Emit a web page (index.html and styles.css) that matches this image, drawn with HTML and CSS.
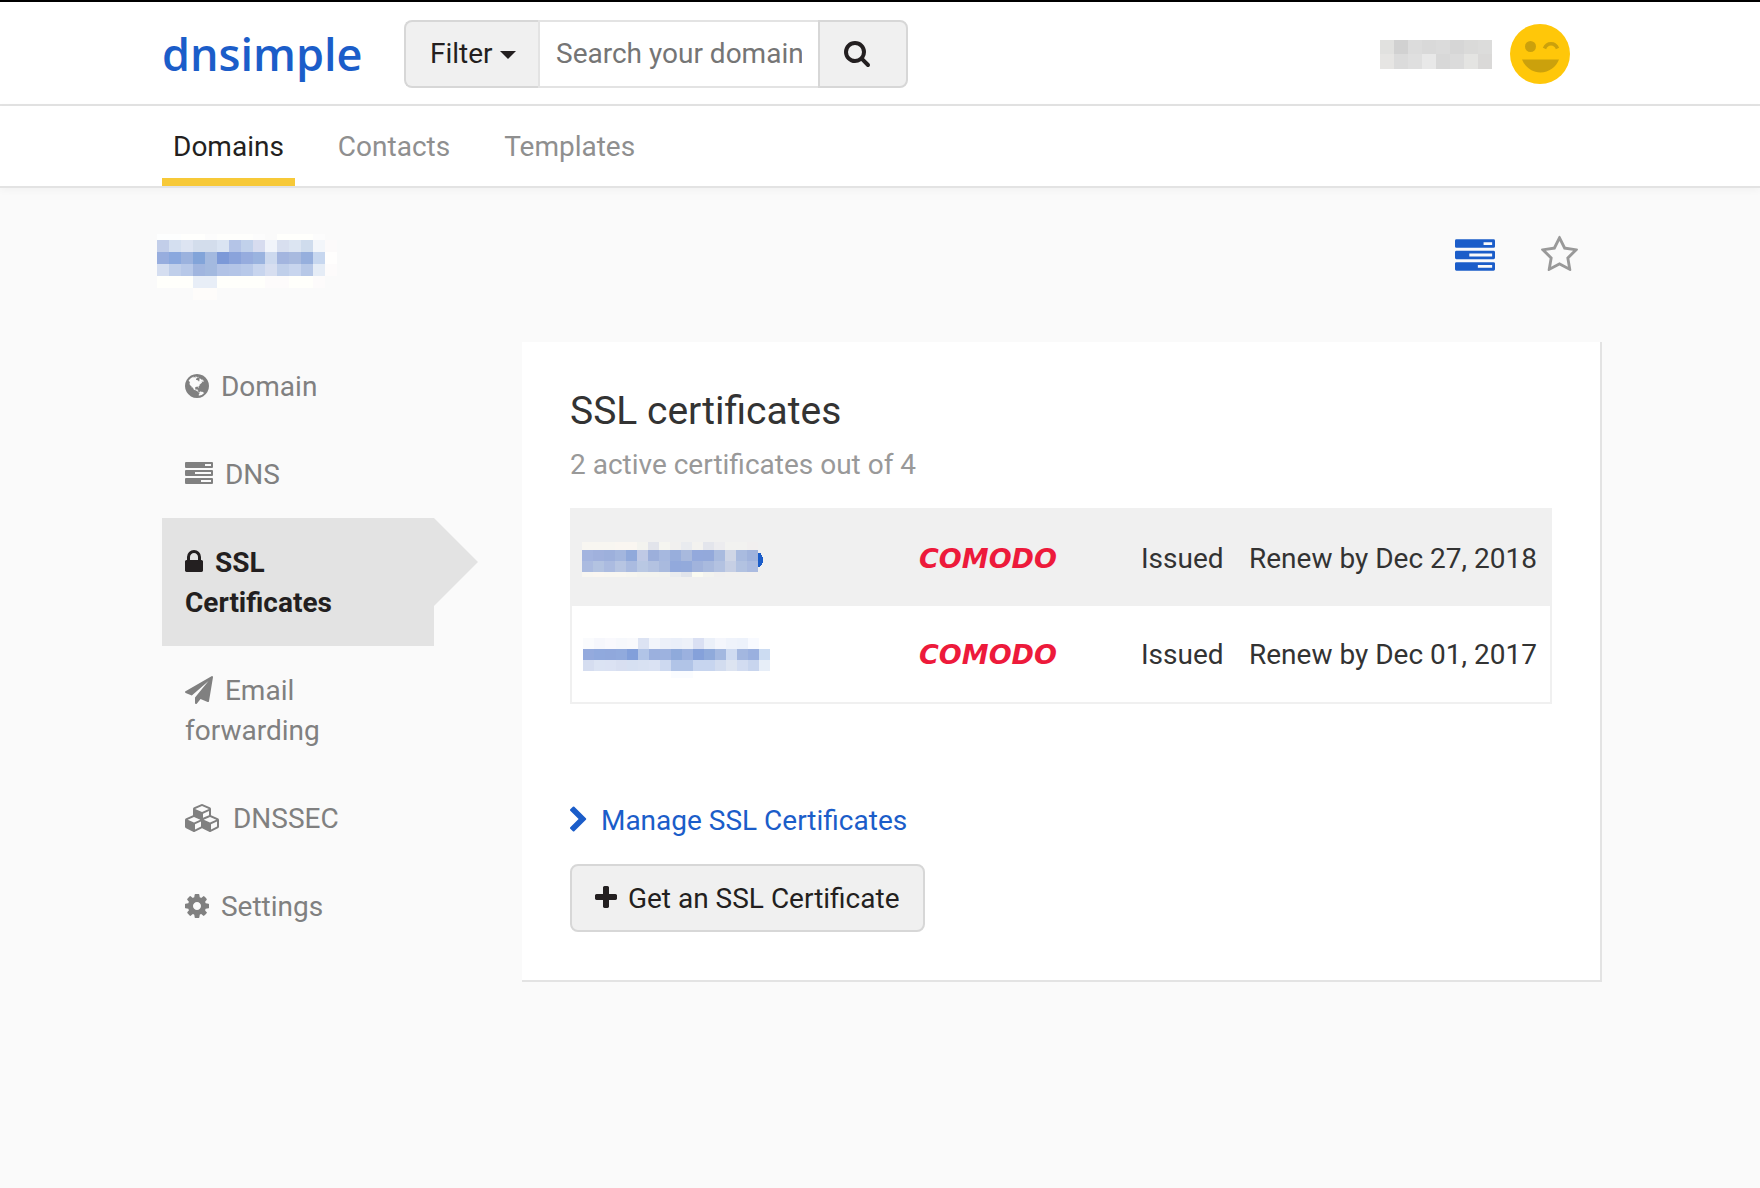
FILE: index.html
```html
<!DOCTYPE html>
<html lang="en">
<head>
<meta charset="utf-8">
<meta name="viewport" content="width=device-width, initial-scale=1">
<title>SSL certificates - DNSimple</title>
<link rel="stylesheet" href="styles.css">
</head>
<body>
<header class="masthead">
  <div class="container masthead-row">
    <a class="logo" href="#">dnsimple</a>
    <form class="search">
      <button class="search-filter" type="button">Filter <span class="caret"></span></button>
      <input class="search-input" type="text" aria-label="Search your domain" placeholder="Search your domain">
      <button class="search-submit" type="submit" aria-label="Search">
        <svg class="icon" width="26" height="28" viewBox="64 0 1664 1792"><path d="M1216 832q0-185-131.5-316.5t-316.5-131.5-316.5 131.5-131.5 316.5 131.5 316.5 316.5 131.5 316.5-131.5 131.5-316.5zm512 832q0 52-38 90t-90 38q-54 0-90-38l-343-342q-179 124-399 124-143 0-273.5-55.5t-225-150-150-225-55.5-273.5 55.5-273.5 150-225 225-150 273.5-55.5 273.5 55.5 225 150 150 225 55.5 273.5q0 220-124 399l343 343q37 37 37 90z"/></svg>
      </button>
    </form>
    <a class="account" href="#" aria-label="Account">
      <svg class="mosaic" data-mosaic="account" width="113" height="29" viewBox="0 0 113 29"></svg>
      <svg width="60" height="60" viewBox="0 0 60 60">
        <circle cx="30" cy="30" r="30" fill="#ffc709"/>
        <circle cx="20.500" cy="22.500" r="5.500" fill="#cba10c"/>
        <path d="M34.500 24.500C37 18 45 18 47.500 24.500" fill="none" stroke="#cba10c" stroke-width="3.500"/>
        <path d="M12 35.500H49C46 43 39 48.500 30.500 48.500S15 43 12 35.500z" fill="#cba10c"/>
      </svg>
    </a>
  </div>
</header>
<nav class="tabs" aria-label="Main">
  <div class="container tabs-row">
    <a class="tab tab-active" href="#">Domains</a>
    <a class="tab" href="#">Contacts</a>
    <a class="tab" href="#">Templates</a>
  </div>
</nav>
<main class="container">
  <div class="title-row">
    <svg class="mosaic title-name" data-mosaic="title" width="192" height="72" viewBox="0 0 192 72"></svg>
    <div class="title-actions">
      <a href="#" aria-label="DNS records" class="action-dns"><svg width="40" height="32" viewBox="0 0 28 22" fill="currentColor"><path fill-rule="evenodd" d="M1 0H27Q28 0 28 1V5Q28 6 27 6H1Q0 6 0 5V1Q0 0 1 0zM20 2V4H26V2zM1 8H27Q28 8 28 9V13Q28 14 27 14H1Q0 14 0 13V9Q0 8 1 8zM10 10V12H26V10zM1 16H27Q28 16 28 17V21Q28 22 27 22H1Q0 22 0 21V17Q0 16 1 16zM16 18V20H26V18z"/></svg></a>
      <a href="#" aria-label="Star domain" class="action-star"><svg width="37" height="40" viewBox="64 0 1664 1792" fill="currentColor"><path d="M1201 1004l306-297-422-62-189-382-189 382-422 62 306 297-73 421 378-199 377 199zm527-357q0 22-26 48l-363 354 86 500q1 7 1 20 0 50-41 50-19 0-40-12l-449-236-449 236q-22 12-40 12-21 0-31.500-14.500t-10.500-35.500q0-6 2-20l86-500-364-354q-25-27-25-48 0-37 56-46l502-73 225-455q19-41 49-41t49 41l225 455 502 73q56 9 56 46z"/></svg></a>
    </div>
  </div>
  <div class="columns">
    <nav class="sidebar" aria-label="Domain">
      <a class="side-item" href="#"><svg class="icon" width="24" height="28" viewBox="128 0 1536 1792"><path d="M896 128q209 0 385.5 103t279.5 279.5 103 385.5-103 385.5-279.5 279.5-385.5 103-385.5-103-279.5-279.5-103-385.5 103-385.5 279.5-279.5 385.5-103zm274 521q-2 1-9.5 9.5t-13.5 9.5q2 0 4.5-5t5-11 3.5-7q6-7 22-15 14-6 52-12 34-8 51 11-2-2 9.5-13t14.5-12q3-2 15-4.5t15-7.5l2-22q-12 1-17.5-7t-6.5-21q0 2-6 8 0-7-4.5-8t-11.5 1-9 1q-10-3-15-7.5t-8-16.5-4-15q-2-5-9.5-11t-9.5-10q-1-2-2.5-5.5t-3-6.5-4-5.5-5.5-2.5-7 5-7.5 10-4.5 5q-3-2-6-1.5t-4.5 1-4.5 3-5 3.5q-3 2-8.5 3t-8.5 2q15-5-1-11-10-4-16-3 9-4 7.5-12t-8.5-14h5q-1-4-8.5-8.5t-17.5-8.5-13-6q-8-5-34-9.5t-33-.5q-5 6-4.5 10.5t4 14 3.5 12.5q1 6-5.5 13t-6.5 12q0 7 14 15.5t10 21.5q-3 8-16 16t-16 12q-5 8-1.5 18.5t10.5 16.5q2 2 1.5 4t-3.5 4.5-5.5 4-6.5 3.5l-3 2q-11 5-20.5-6t-13.5-26q-7-25-16-30-23-8-29 1-5-13-41-26-25-9-58-4 6-1 0-15-7-15-19-12 3-6 4-17.5t1-13.5q3-13 12-23 1-1 7-8.5t9.5-13.5.5-6q35 4 50-11 5-5 11.5-17t10.5-17q9-6 14-5.5t14.5 5.5 14.5 5q14 1 15.5-11t-7.5-20q12 1 3-17-5-7-8-9-12-4-27 5-8 4 2 8-1-1-9.5 10.5t-16.5 17.5-16-5q-1-1-5.5-13.5t-9.5-13.5q-8 0-16 15 3-8-11-15t-24-8q19-12-8-27-7-4-20.5-5t-19.5 4q-5 7-5.500 11.500t5 8 10.500 5.500 11.500 4 8.500 3q14 10 8 14-2 1-8.5 3.5t-11.5 4.5-6 4q-3 4 0 14t-2 14q-5-5-9-17.5t-7-16.5q7 9-25 6l-10-1q-4 0-16 2t-20.5 1-13.5-8q-4-8 0-20 1-4 4-2-4-3-11-9.5t-10-8.5q-46 15-94 41 6 1 12-1 5-2 13-6.5t10-5.5q34-14 42-7l5-5q14 16 20 25-7-4-30-1-20 6-22 12 7 12 5 18-4-3-11.5-10t-14.5-11-15-5q-16 0-22 1-146 80-235 222 7 7 12 8 4 1 5 9t2.5 11 11.5-3q9 8 3 19 1-1 44 27 19 17 21 21 3 11-10 18-1-2-9-9t-9-4q-3 5 .5 18.5t10.5 12.5q-7 0-9.5 16t-2.5 35.5-1 23.5l2 1q-3 12 5.5 34.5t21.5 19.5q-13 3 20 43 6 8 8 9 3 2 12 7.5t15 10 10 10.5q4 5 10 22.5t14 23.5q-2 6 9.5 20t10.5 23q-1 0-2.5 1t-2.5 1q3 7 15.5 14t15.5 13q1 3 2 10t3 11 8 2q2-20-24-62-15-25-17-29-3-5-5.5-15.5t-4.5-14.5q2 0 6 1.5t8.5 3.5 7.5 4 2 3q-3 7 2 17.5t12 18.5 17 19 12 13q6 6 14 19.5t0 13.5q9 0 20 10t17 20q5 8 8 26t5 24q2 7 8.5 13.5t12.5 9.5l16 8 13 7q5 2 18.5 10.5t21.5 11.5q10 4 16 4t14.5-2.5 13.5-3.5q15-2 29 15t21 21q36 19 55 11-2 1 .5 7.5t8 15.5 9 14.5 5.5 8.5q5 6 18 15t18 15q6-4 7-9-3 8 7 20t18 10q14-3 14-32-31 15-49-18 0-1-2.5-5.5t-4-8.5-2.5-8.5 0-7.5 5-3q9 0 10-3.5t-2-12.5-4-13q-1-8-11-20t-12-15q-5 9-16 8t-16-9q0 1-1.5 5.5t-1.5 6.5q-13 0-15-1 1-3 2.5-17.5t3.5-22.5q1-4 5.5-12t7.5-14.5 4-12.5-4.5-9.5-17.5-2.5q-19 1-26 20-1 3-3 10.5t-5 11.5-9 7q-7 3-24 2t-24-5q-13-8-22.5-29t-9.5-37q0-10 2.5-26.5t3-25-5.5-24.5q3-2 9-9.5t10-10.5q2-1 4.5-1.5t4.5 0 4-1.5 3-6q-1-1-4-3-3-3-4-3 7 3 28.5-1.5t27.5 1.5q15 11 22-2 0-1-2.5-9.5t-.5-13.5q5 27 29 9 3 3 15.5 5t17.5 5q3 2 7 5.5t5.5 4.5 5-.5 8.5-6.5q10 14 12 24 11 40 19 44 7 3 11 2t4.500-9.500 0-14-1.500-12.500l-1-8v-18l-1-8q-15-3-18.5-12t1.5-18.5 15-18.5q1-1 8-3.5t15.5-6.5 12.5-8q21-19 15-35 7 0 11-9-1 0-5-3t-7.5-5-4.500-2q9-5 2-16 5-3 7.500-11t7.500-10q9 12 21 2 7-8 1-16 5-7 20.5-10.5t18.5-9.5q7 2 8-2t1-12 3-12q4-5 15-9t13-5l17-11q3-4 0-4 18 2 31-11 10-11-6-20 3-6-3-9.5t-15-5.5q3-1 11.5-.5t10.5-1.5q15-10-7-16-17-5-43 12zm-163 877q206-36 351-189-3-3-12.5-4.5t-12.5-3.5q-18-7-24-8 1-7-2.5-13t-8-9-12.5-8-11-7q-2-2-7-6t-7-5.5-7.5-4.5-8.5-2-10 1l-3 1q-3 1-5.5 2.5t-5.5 3-4 3 0 2.5q-21-17-36-22-5-1-11-5.5t-10.5-7-10-1.5-11.5 7q-5 5-6 15t-2 13q-7-5 0-17.5t2-18.5q-3-6-10.5-4.5t-12 4.5-11.5 8.5-9 6.5-8.5 5.5-8.5 7.5q-3 4-6 12t-5 11q-2-4-11.5-6.5t-9.5-5.5q2 10 4 35t5 38q7 31-12 48-27 25-29 40-4 22 12 26 0 7-8 20.5t-7 21.5q0 6 2 16z"/></svg> Domain</a>
      <a class="side-item" href="#"><svg class="icon" width="28" height="28" viewBox="0 -2 28 28"><path fill-rule="evenodd" d="M1 0H27Q28 0 28 1V5Q28 6 27 6H1Q0 6 0 5V1Q0 0 1 0zM20 2V4H26V2zM1 8H27Q28 8 28 9V13Q28 14 27 14H1Q0 14 0 13V9Q0 8 1 8zM10 10V12H26V10zM1 16H27Q28 16 28 17V21Q28 22 27 22H1Q0 22 0 21V17Q0 16 1 16zM16 18V20H26V18z"/></svg> DNS</a>
      <a class="side-item side-active" href="#"><svg class="icon" width="18" height="28" viewBox="320 0 1152 1792"><path d="M640 768h512v-192q0-106-75-181t-181-75-181 75-75 181v192zm832 96v576q0 40-28 68t-68 28h-960q-40 0-68-28t-28-68v-576q0-40 28-68t68-28h32v-192q0-184 132-316t316-132 316 132 132 316v192h32q40 0 68 28t28 68z"/></svg> SSL Certificates</a>
      <a class="side-item" href="#"><svg class="icon" width="28" height="28" viewBox="0 0 1792 1792"><path d="M1764 11q33 24 27 64l-256 1536q-5 29-32 45-14 8-31 8-11 0-24-5l-453-185-242 295q-18 23-49 23-13 0-22-4-19-7-30.5-23.5t-11.5-36.5v-349l864-1059-1069 925-395-162q-37-14-40-55-2-40 32-59l1664-960q15-9 32-9 20 0 36 11z"/></svg> Email forwarding</a>
      <a class="side-item" href="#"><svg class="icon" width="36" height="28" viewBox="0 0 2304 1792"><path d="M640 1632l384-192v-314l-384 164v342zm-64-454l404-173-404-173-404 173zm1088 454l384-192v-314l-384 164v342zm-64-454l404-173-404-173-404 173zm-448-293l384-165v-266l-384 164v267zm-64-379l441-189-441-189-441 189zm1088 518v416q0 36-19 67t-52 47l-448 224q-25 14-57 14t-57-14l-448-224q-4-2-7-4-2 2-7 4l-448 224q-25 14-57 14t-57-14l-448-224q-33-16-52-47t-19-67v-416q0-38 21.5-70t56.5-48l434-186v-400q0-38 21.5-70t56.5-48l448-192q23-10 50-10t50 10l448 192q35 16 56.5 48t21.5 70v400l434 186q36 16 57 48t21 70z"/></svg> DNSSEC</a>
      <a class="side-item" href="#"><svg class="icon" width="24" height="28" viewBox="128 0 1536 1792"><path d="M1152 896q0-106-75-181t-181-75-181 75-75 181 75 181 181 75 181-75 75-181zm512-109v222q0 12-8 23t-20 13l-185 28q-19 54-39 91 35 50 107 138 10 12 10 25t-9 23q-27 37-99 108t-94 71q-12 0-26-9l-138-108q-44 23-91 38-16 136-29 186-7 28-36 28h-222q-14 0-24.5-8.5t-11.5-21.5l-28-184q-49-16-90-37l-141 107q-10 9-25 9-14 0-25-11-126-114-165-168-7-10-7-23 0-12 8-23 15-21 51-66.5t54-70.5q-27-50-41-99l-183-27q-13-2-21-12.5t-8-23.5v-222q0-12 8-23t19-13l186-28q14-46 39-92-40-57-107-138-10-12-10-24 0-10 9-23 26-36 98.5-107.5t94.5-71.5q13 0 26 10l138 107q44-23 91-38 16-136 29-186 7-28 36-28h222q14 0 24.5 8.5t11.5 21.5l28 184q49 16 90 37l142-107q9-9 24-9 13 0 25 10 129 119 165 170 7 8 7 22 0 12-8 23-15 21-51 66.5t-54 70.5q26 50 41 98l183 28q13 2 21 12.5t8 23.5z"/></svg> Settings</a>
    </nav>
    <section class="card">
      <h1 class="card-title">SSL certificates</h1>
      <p class="card-subtitle">2 active certificates out of 4</p>
      <table class="certs">
        <colgroup><col><col class="col-vendor"><col class="col-status"><col class="col-renewal"></colgroup>
        <tbody>
          <tr>
            <td><svg class="mosaic" data-mosaic="first" width="190" height="44" viewBox="0 0 190 44"><ellipse cx="176" cy="22" rx="4" ry="7" fill="#1b5dc9"/></svg></td>
            <td class="vendor">COMODO</td>
            <td>Issued</td>
            <td>Renew by Dec 27, 2018</td>
          </tr>
          <tr>
            <td><svg class="mosaic" data-mosaic="second" width="190" height="44" viewBox="0 0 190 44"></svg></td>
            <td class="vendor">COMODO</td>
            <td>Issued</td>
            <td>Renew by Dec 01, 2017</td>
          </tr>
        </tbody>
      </table>
      <a class="manage" href="#"><svg class="icon" width="20" height="28" viewBox="346 0 1280 1792"><path d="M1363 877l-742 742q-19 19-45 19t-45-19l-166-166q-19-19-19-45t19-45l531-531-531-531q-19-19-19-45t19-45l166-166q19-19 45-19t45 19l742 742q19 19 19 45t-19 45z"/></svg> Manage SSL Certificates</a>
      <button class="button" type="button"><svg class="icon" width="22" height="28" viewBox="192 0 1408 1792"><path d="M1600 736v192q0 40-28 68t-68 28h-416v416q0 40-28 68t-68 28h-192q-40 0-68-28t-28-68v-416h-416q-40 0-68-28t-28-68v-192q0-40 28-68t68-28h416v-416q0-40 28-68t68-28h192q40 0 68 28t28 68v416h416q40 0 68 28t28 68z"/></svg> Get an SSL Certificate</button>
    </section>
  </div>
</main>
<script src="mosaic.js"></script>
</body>
</html>
```
FILE: styles.css
```css
* {
  box-sizing: border-box;
}

body {
  margin: 0;
  background: #fafafa;
  color: #333;
  font: 28px/40px Roboto, "Liberation Sans", sans-serif;
}

a {
  color: inherit;
  text-decoration: none;
}

button,
input {
  margin: 0;
  font: inherit;
}

svg {
  display: block;
}

.icon {
  display: inline-block;
  margin-right: 4px;
  vertical-align: -4px;
  fill: currentColor;
}

.mosaic {
  overflow: visible;
  shape-rendering: crispEdges;
}

.container {
  max-width: 1444px;
  margin: 0 auto;
  padding-left: 4px;
}

/* Header */
.masthead {
  background: #fff;
  border-top: 2px solid #000;
  border-bottom: 2px solid #e3e3e3;
}

.masthead-row {
  display: flex;
  align-items: center;
  height: 102px;
  padding-top: 2px;
  padding-right: 32px;
}

.logo {
  width: 242px;
  color: #1b5dc9;
  font: 600 45px/60px "Open Sans", "Noto Sans", sans-serif;
}

.search {
  display: flex;
  height: 68px;
}

.search-filter,
.search-submit,
.button {
  border: 2px solid #d7d7d7;
  background: #f0f0f0;
  color: #231f20;
  padding: 0 24px;
  white-space: nowrap;
  cursor: pointer;
}

.search-filter {
  width: 134px;
  border-right: 0;
  border-radius: 8px 0 0 8px;
}

.caret {
  display: inline-block;
  border: 8px solid transparent;
  border-top-color: currentColor;
  border-bottom: 0;
  vertical-align: 4px;
}

.search-input {
  width: 280px;
  padding: 0 16px;
  border: 2px solid #e3e3e3;
  border-right: 0;
  background: #fff;
  color: #333;
}

.search-input::placeholder {
  color: #757575;
  opacity: 1;
}

.search-submit {
  width: 90px;
  border-radius: 0 8px 8px 0;
  text-align: left;
}

.account {
  display: flex;
  align-items: center;
  gap: 17px;
  margin-left: auto;
}

/* Main tabs */
.tabs {
  background: #fff;
  border-bottom: 2px solid #e3e3e3;
  box-shadow: 0 2px 8px rgba(0, 0, 0, 0.04);
}

.tabs-row {
  display: flex;
  gap: 32px;
}

.tab {
  padding: 21px 11px 11px;
  border-bottom: 8px solid transparent;
  color: #8f8f8f;
}

.tab-active {
  border-color: #f7c938;
  color: #231f20;
}

/* Domain title */
.title-row {
  display: flex;
  justify-content: space-between;
  align-items: center;
  height: 154px;
  padding: 0 24px 20px 0;
}

.title-name {
  margin: 26px 0 0 -10px;
}

.title-actions {
  display: flex;
  align-items: center;
  gap: 46px;
}

.action-dns {
  color: #1b5dc9;
}

.action-star {
  color: #999;
}

/* Sidebar and content */
.columns {
  display: flex;
  align-items: flex-start;
  gap: 88px;
}

.sidebar {
  flex: 0 0 272px;
}

.side-item {
  display: block;
  padding: 25px 46px 23px 23px;
  color: #808080;
}

.side-item .icon {
  margin-right: 5px;
}

.side-active {
  position: relative;
  background: #e3e3e3;
  color: #231f20;
  font-weight: bold;
}

.side-active::after {
  content: "";
  position: absolute;
  top: 0;
  left: 100%;
  border: 44px solid transparent;
  border-left-color: #e3e3e3;
  border-right: 0;
}

.card {
  flex: 1;
  padding: 49px 48px 48px;
  border: solid #e3e3e3;
  border-width: 0 2px 2px 0;
  background: #fff;
}

.card-title {
  margin: 0 0 14px;
  font-size: 39px;
  font-weight: normal;
  line-height: 40px;
}

.card-subtitle {
  margin: 0 0 23px;
  color: #999;
}

.certs {
  width: 100%;
  margin-bottom: 97px;
  border: 2px solid #f0f0f0;
  border-spacing: 0;
  table-layout: fixed;
}

.certs td {
  height: 96px;
  padding: 2px 11px 0 13px;
  white-space: nowrap;
}

.certs .mosaic {
  margin: 2px 0 0 -2px;
}

.certs tr:first-child {
  background: #f0f0f0;
}

.col-vendor {
  width: 222px;
}

.col-status {
  width: 108px;
}

.col-renewal {
  width: 314px;
}

.certs .vendor {
  color: #ed1a3b;
  font: italic bold 27px/40px "DejaVu Sans", sans-serif;
}

.manage {
  display: block;
  margin-bottom: 23px;
  color: #1b5dc9;
}

.button {
  height: 68px;
  padding: 2px 23px 0;
  border-radius: 8px;
}
```
FILE: mosaic.js
```js
// Pixelated placeholders for private names: each row is [y, height, first x, cell colours].
const mosaics = {
  account: { cell: 14, rows: [
    [0, 14, 0, "e1e1df d1d1d1 dcdcdc d9d9d9 dbdbdb d6d6d6 dadad9 dcdcdb"],
    [14, 15, 0, "e6e5e3 dbdbdb dfdfdf e8e8e8 d8d8d8 dbdbdb e4e4e2 dad9d8"]
  ]},
  title: { cell: 12, rows: [
    [2, 6, 5, "fdfefe fdfefe fffffd fffffd fcfcfc fefefc fefefc fefefc fcfcfc fafafa fffffc fffffc fffffc fcfcfc"],
    [8, 12, 5, "c2cee9 d4dff0 dde4f2 d3ddec d3ddec dae4f2 b4c4e7 c1d1eb d7dcef f1f4fa d8dfef dce5f2 cfdced f3f6fa fcfafa"],
    [20, 12, 5, "97adde 8aa8de 9bb2de 82a4d9 a3b9df 7c99d8 8aa3db 96acde 9ab3df cdd9ee a3b5df a8badf 96afdd c7d7ef fffefd"],
    [32, 12, 5, "d5def0 c0cfea b7c8e8 a0b5df a3b9df b2c3e6 b4c5e7 b8c9e9 c8d5ee d7def0 c0cfea c8d5ee b7c8e7 e5ecf6 fdfbfb"],
    [44, 12, 5, "fffffb fffffb fffffb e8eef7 e8eef7 fffffb fffffb fffffb fffffb fdfbfb fdfbfb fffffb fffffb fdfbfb"],
    [56, 12, 41, "fefcfa fefcfa"]
  ]},
  first: { cell: 11, rows: [
    [4, 8, -1, "f8f6f1 f8f6f1 f8f6f1 faf6f1 faf6f1 f3f3ef e2e4eb f5f5f0 f1f0ef e9ebef f3f2ef e3e5ec ececef f2f2f0 f2f2f0 f1efef"],
    [12, 11, -1, "a3b4df a0b1dd 9db0dc a3b6de 90a9db bfc9e5 9cafdb a6b8df 98aedc a8b9dd 93a9dc 93a9db a9bbdf cfd6e6 a9bbdf a0b3dc"],
    [23, 11, -1, "abbbe0 b3c3e1 abbbe0 b7c5e2 aabbe0 b9c8e3 b3c2e1 a9bade 92a9dc 93aadb a1b3dc a9bade b3c2e1 c6cfe4 b2c2e1 abbbe0"],
    [34, 5, -1, "f8f6f1 faf6f1 f8f6f1 f8f6f1 f6f5f0 f3f3ef f3f3ef f2f2ef eaecef e1e4eb fafaf1 f3f3ef f0efef f1f0ef f1f0ef f2f0ef"]
  ]},
  second: { cell: 11, rows: [
    [4, 11, 0, "fafbfd f6f7fc f9f9fd f6f8fc f8f9fc dce3f3 f2f5fb ecf0f9 eaeff9 edf1f9 dae0f3 ebf0f9 f4f6fc eff3fb edf2fb f8faff"],
    [15, 11, 0, "94aadd 90a9dd 90a8dc 91aadd 829fda b1c4e7 9bb0de 9db2df 8faadb 9bb1df 85a1da 8faadb a3b8e0 cfdbf1 a3b7e0 9ab0df ccdcf2"],
    [26, 11, 0, "d5ddf0 dbe3f3 dbe2f3 d8dff1 d6e0f2 d8e1f2 dae2f3 cdd9f0 b1c4e7 b1c4e7 c7d5ef c7d5ef d2dcef dde4f1 d2dcf1 c8d5ee e7eef8"],
    [37, 7, 88, "fafcff fafcff"]
  ]}
};

for (const svg of document.querySelectorAll("[data-mosaic]")) {
  const { cell, rows } = mosaics[svg.dataset.mosaic];
  for (const [y, height, x, colours] of rows) {
    colours.split(" ").forEach((colour, i) => {
      const rect = document.createElementNS("http://www.w3.org/2000/svg", "rect");
      rect.setAttribute("x", x + i * cell);
      rect.setAttribute("y", y);
      rect.setAttribute("width", cell);
      rect.setAttribute("height", height);
      rect.setAttribute("fill", "#" + colour);
      svg.append(rect);
    });
  }
}
```
